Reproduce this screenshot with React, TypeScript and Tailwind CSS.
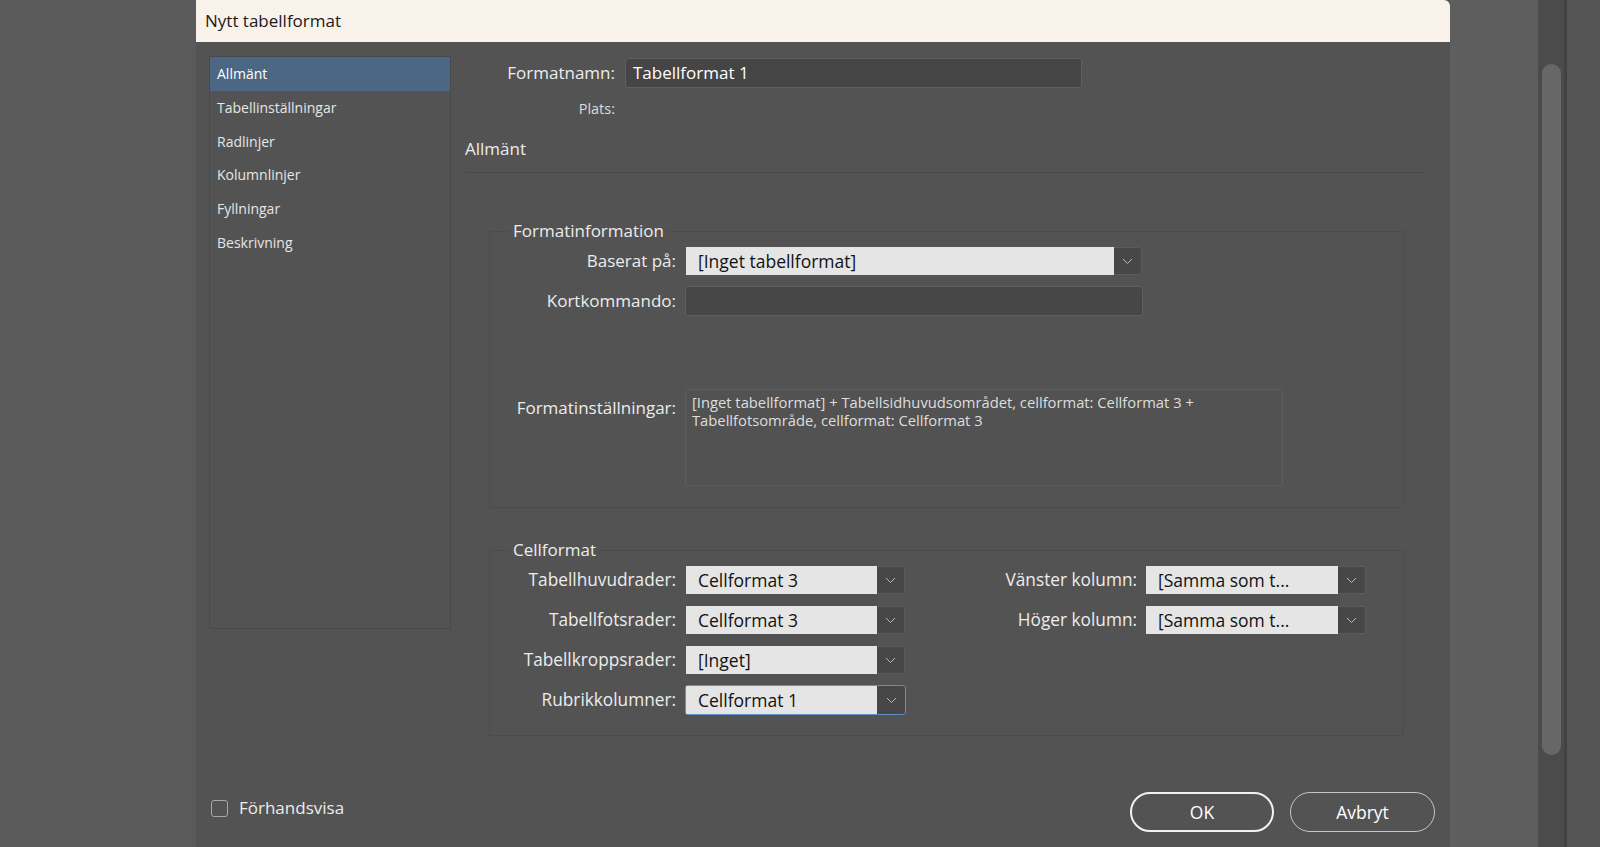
import { useState } from "react";

const font = { fontFamily: '"Open Sans", "Noto Sans", sans-serif' };

function Chevron() {
	return (
		<svg width="11" height="7" viewBox="0 0 11 7" className="text-[#b9b9b9]">
			<polyline points="1,1 5.5,5.5 10,1" fill="none" stroke="currentColor" strokeWidth="1" />
		</svg>
	);
}

interface SelectProps {
	value: string
	boxClass: string
	focus?: boolean
}

function Select({ value, boxClass, focus }: SelectProps) {
	return (
		<div className={`flex h-[30px] shrink-0 rounded-[3px] border ${focus ? "border-[#5f8fc6]" : "border-transparent"} ${boxClass}`}>
			<div className="flex flex-1 items-center bg-[#e5e5e5] pl-[12px] text-[17.5px] text-[#121212]">{value}</div>
			<div className={`flex w-[28px] items-center justify-center rounded-r-[3px] bg-[#474747] ${focus ? "" : "border border-l-0 border-[#5b5b5b]"}`}>
				<Chevron />
			</div>
		</div>
	);
}

const menu = ["Allmänt", "Tabellinställningar", "Radlinjer", "Kolumnlinjer", "Fyllningar", "Beskrivning"];

export default function App() {
	const [selected, setSelected] = useState("Allmänt");
	const [preview, setPreview] = useState(false);

	return (
		<div className="flex h-[847px] w-[1600px] overflow-hidden bg-[#585858] text-[#ececec]" style={font}>
			<div className="w-[196px] shrink-0 bg-[#5a5a5a]" />

			{/* dialog */}
			<div className="flex w-[1254px] shrink-0 flex-col bg-[#535353]">
				<div className="flex h-[42px] shrink-0 items-center rounded-tr-[6px] bg-[#f9f2ea] px-[9px] text-[17px] text-[#1a1a1a]">
					Nytt tabellformat
				</div>

				<div className="flex flex-1">
					<ul className="ml-[13px] mt-[14px] h-[573px] w-[242px] shrink-0 border border-[#4a4a4a]">
						{menu.map((item) => (
							<li
								key={item}
								onClick={() => setSelected(item)}
								className={`flex h-[33.7px] cursor-default items-center pl-[7px] text-[14px] ${selected === item ? "bg-[#4c6784] text-white" : "text-[#e6e6e6]"}`}
							>
								{item}
							</li>
						))}
					</ul>

					<div className="ml-[14px] flex w-[963px] flex-col pt-[16px]">
						<div className="flex items-center gap-[10px]">
							<span className="w-[150px] text-right text-[17px]">Formatnamn:</span>
							<div className="flex h-[30px] w-[457px] items-center rounded-[3px] border border-[#5f5f5f] bg-[#454545] pl-[7px] text-[17px] text-white">
								Tabellformat 1
							</div>
						</div>
						<div className="mt-[12px] flex">
							<span className="w-[150px] text-right text-[14.5px] leading-[18px] text-[#dcdcdc]">Plats:</span>
						</div>

						<h2 className="mt-[20px] text-[17px] leading-[22px]">Allmänt</h2>
						<div className="mt-[12px] h-px bg-[#4b4b4b]" />

						<fieldset className="ml-[24px] mt-[47px] w-[915px] border border-[#4c4c4c] px-0 pb-[21px]">
							<legend className="ml-[19px] px-[4px] text-[17px] leading-[22px]">Formatinformation</legend>
							<div className="mt-[4px] flex items-center gap-[9px]">
								<span className="w-[186px] text-right text-[17px]">Baserat på:</span>
								<Select value="[Inget tabellformat]" boxClass="w-[458px]" />
							</div>
							<div className="mt-[10px] flex items-center gap-[9px]">
								<span className="w-[186px] text-right text-[17px]">Kortkommando:</span>
								<div className="h-[30px] w-[458px] rounded-[3px] border border-[#5e5e5e] bg-[#474747]" />
							</div>
							<div className="mt-[73px] flex items-start gap-[9px]">
								<span className="mt-[6px] w-[186px] text-right text-[17px]">Formatinställningar:</span>
								<div className="h-[97px] w-[598px] rounded-[2px] border border-[#5d5d5d] bg-[#525252] px-[6px] pt-[4px] text-[14.75px] leading-[17.5px] text-[#dedede]">
									[Inget tabellformat] + Tabellsidhuvudsområdet, cellformat: Cellformat 3 +
									<br />
									Tabellfotsområde, cellformat: Cellformat 3
								</div>
							</div>
						</fieldset>

						<fieldset className="ml-[24px] mt-[31px] w-[915px] border border-[#4c4c4c] px-0 pb-[20px]">
							<legend className="ml-[19px] px-[4px] text-[17px] leading-[22px]">Cellformat</legend>
							<div className="mt-[4px] flex">
								<div className="flex flex-col gap-[10px]">
									{[
										["Tabellhuvudrader:", "Cellformat 3"],
										["Tabellfotsrader:", "Cellformat 3"],
										["Tabellkroppsrader:", "[Inget]"],
										["Rubrikkolumner:", "Cellformat 1"],
									].map(([label, value], i) => (
										<div key={label} className="flex items-center gap-[9px]">
											<span className="w-[186px] text-right text-[17.25px]">{label}</span>
											<Select value={value} boxClass="w-[221px]" focus={i === 3} />
										</div>
									))}
								</div>
								<div className="flex flex-col gap-[10px]">
									{["Vänster kolumn:", "Höger kolumn:"].map((label) => (
										<div key={label} className="flex items-center gap-[8px]">
											<span className="w-[231px] text-right text-[17.25px]">{label}</span>
											<Select value="[Samma som t..." boxClass="w-[222px]" />
										</div>
									))}
								</div>
							</div>
						</fieldset>
					</div>
				</div>

				<div className="mb-[15px] flex h-[40px] shrink-0 items-center pl-[15px] pr-[15px]">
					<label className="mb-[8px] flex items-center gap-[11px] text-[17px]">
						<input
							type="checkbox"
							checked={preview}
							onChange={(e) => setPreview(e.target.checked)}
							className="h-[17px] w-[17px] appearance-none rounded-[3px] border border-[#a8a8a8] bg-transparent"
						/>
						Förhandsvisa
					</label>
					<div className="ml-auto flex gap-[16px]">
						<button className="h-[40px] w-[144px] rounded-full border-2 border-[#f2f2f2] text-[17.5px] text-white">OK</button>
						<button className="h-[40px] w-[145px] rounded-full border border-[#c6c6c6] text-[17.5px] text-white">Avbryt</button>
					</div>
				</div>
			</div>

			{/* background window */}
			<div className="w-[88px] shrink-0 bg-[#5e5e5e]" />
			<div className="flex w-[26px] shrink-0 justify-center bg-[#4b4b4b] pt-[64px]">
				<div className="h-[691px] w-[19px] rounded-full bg-[#676767]" />
			</div>
			<div className="w-[3px] shrink-0 bg-[#424242]" />
			<div className="flex-1 bg-[#545454]" />
		</div>
	);
}
